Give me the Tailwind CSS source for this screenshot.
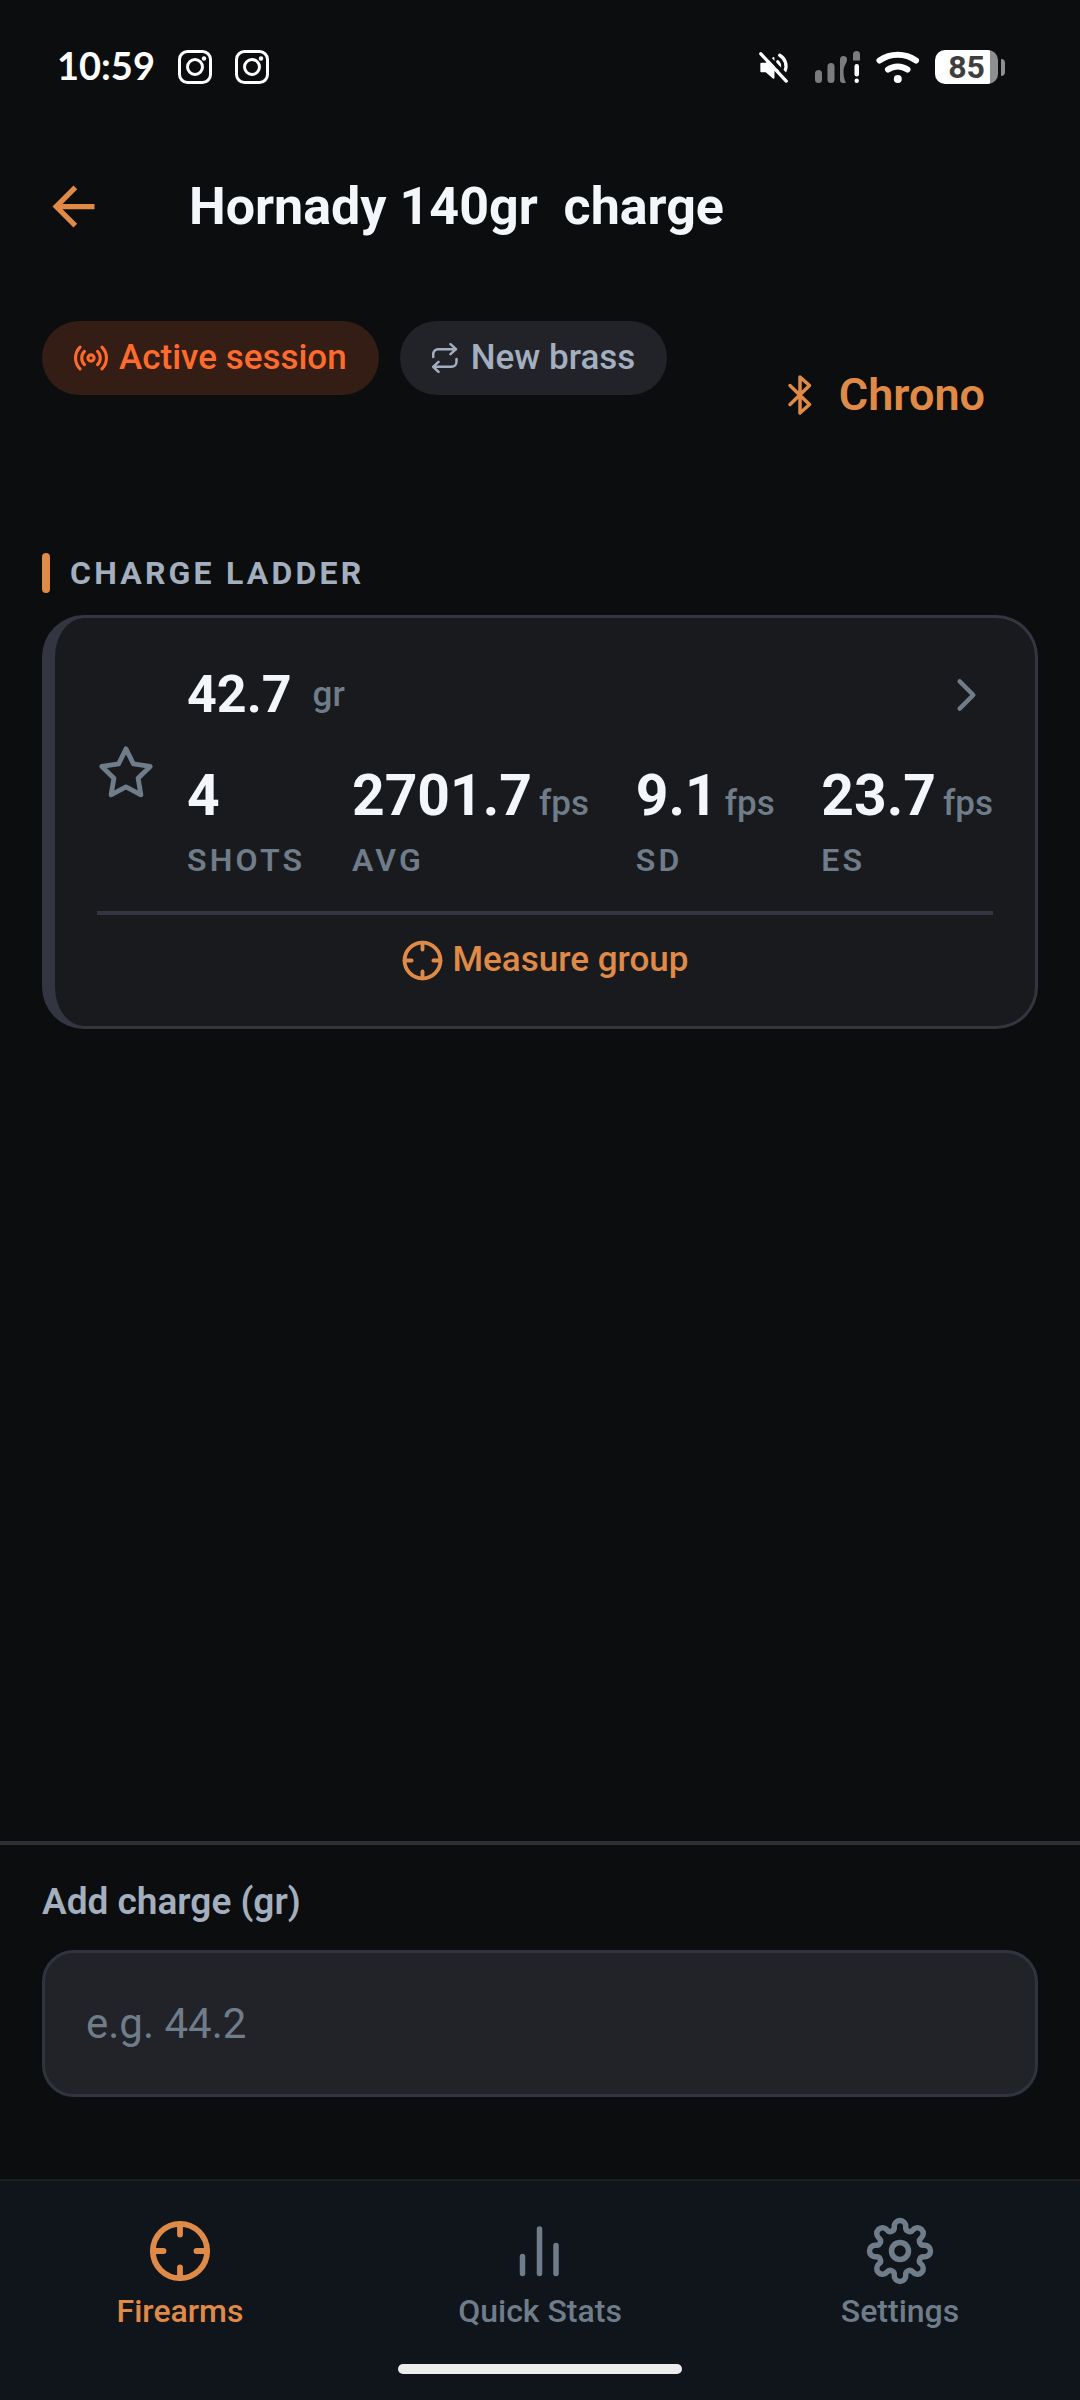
<!DOCTYPE html>
<html lang="en">
<head>
    <meta charset="UTF-8">
    <meta name="viewport" content="width=device-width, initial-scale=1.0">
    <title>Hornady 140gr charge</title>

    <script src="https://cdn.jsdelivr.net/npm/@tailwindcss/browser@4"></script>
</head>
<body class="min-h-screen flex flex-col bg-[#0b0d0e] font-['Roboto',sans-serif] text-[#f3f6fa]">

    <!-- Shared icons -->
    <svg class="hidden">
        <symbol id="crosshair" viewBox="0 0 64 64">
            <g fill="none" stroke="currentColor" stroke-width="6" stroke-linecap="round">
                <circle cx="32" cy="32" r="28"/>
                <path d="M32 4v11M32 49v11M4 32h11M49 32h11"/>
            </g>
        </symbol>
        <symbol id="instagram" viewBox="0 0 34 34">
            <rect x="1.5" y="1.5" width="31" height="31" rx="8" fill="none" stroke="currentColor" stroke-width="3"/>
            <circle cx="17" cy="17" r="7.5" fill="none" stroke="currentColor" stroke-width="3"/>
            <circle cx="26" cy="8.5" r="2.2" fill="currentColor"/>
        </symbol>
    </svg>

    <!-- Status bar -->
    <div class="flex items-center justify-between pt-[41px] pl-[57px] pr-[75px] text-white">
        <div class="flex items-center gap-[23px] h-[52px]">
            <span class="pb-1 font-['Lato',sans-serif] font-bold text-[38px] leading-[48px]">10:59</span>
            <svg class="w-[34px] h-[34px]"><use href="#instagram"/></svg>
            <svg class="w-[34px] h-[34px]"><use href="#instagram"/></svg>
        </div>
        <div class="flex items-center">
            <!-- muted -->
            <svg class="w-8 h-8 mr-[25px]" viewBox="0 1 32 34" fill="none" stroke="#fff" stroke-width="3.500" stroke-linecap="round">
                <path d="M2.5 14.5h5l8-6v21l-8-7h-5z" fill="#fff" stroke-width="2" stroke-linejoin="round"/>
                <path d="M20 12.500a7 7 0 0 1 1 8M22 5.500a13 13 0 0 1 5.500 17"/>
                <path d="M4 1.500L32 30" stroke="#0b0d0e" stroke-width="4"/>
                <path d="M2 4L29 33"/>
            </svg>
            <!-- signal -->
            <svg class="w-[45px] h-8 mr-4" viewBox="0 0 45 32" fill="#7c7c7c">
                <rect y="19" width="7" height="13" rx="3.500"/>
                <rect x="12.500" y="12" width="7" height="20" rx="3.500"/>
                <path d="M25 8.500a3.500 3.500 0 0 1 7 0c0 4-3.500 6-3.500 12 0 5 1 9 2.500 11-3 1.500-6 .5-6-2.500z"/>
                <path d="M38 9.500V3.500a3.500 3.500 0 0 1 7 0v6z"/>
                <rect x="39.500" y="13" width="4.500" height="12.500" rx="2.200" fill="#fff"/>
                <circle cx="41.700" cy="29.700" r="2.200" fill="#fff"/>
            </svg>
            <!-- wifi -->
            <svg class="w-11 h-8 mr-[15px]" viewBox="0 0 44 32" fill="none" stroke="#fff" stroke-width="6" stroke-linecap="round">
                <path d="M3.500 9.500a32 32 0 0 1 36.500 0M12 18.500a17 17 0 0 1 19.500 0"/>
                <circle cx="21.800" cy="28" r="4" fill="#fff" stroke="none"/>
            </svg>
            <!-- battery -->
            <span class="flex items-center justify-center w-[63px] h-[34px] rounded-[10px] bg-linear-to-r from-white from-[88%] to-[#8f8f91] to-[88%] font-bold text-[32px] leading-none text-[#3e3e3e]">85</span>
            <span class="w-1 h-[17px] ml-[3px] rounded-r-full bg-[#8f8f91]"></span>
        </div>
    </div>

    <header class="flex items-center gap-[84px] pt-[82px] pb-[83px] px-[42px]">
        <button aria-label="Back" class="text-[#e08a48]">
            <svg class="w-[63px] h-[63px]" viewBox="0 0 24 24" fill="currentColor"><path d="M20 11H7.830l5.590-5.590L12 4l-8 8 8 8 1.410-1.410L7.830 13H20v-2z"/></svg>
        </button>
        <h1 class="font-bold text-[52px] leading-[62px] whitespace-pre">Hornady 140gr  charge</h1>
    </header>

    <main class="flex-1 px-[42px]">
        <div class="flex items-start justify-between">
            <div class="flex gap-[21px] font-medium text-[35px] leading-[46px]">
                <span class="flex items-center gap-[11px] px-8 py-[14px] rounded-full bg-[#331d15] text-[#ff6b2c]">
                    <svg class="w-[34px] h-[34px]" viewBox="1 1 22 22" fill="none" stroke="currentColor" stroke-width="2" stroke-linecap="round">
                        <circle cx="12" cy="12" r="2"/>
                        <path d="M16.240 7.760a6 6 0 0 1 0 8.490M7.760 16.240a6 6 0 0 1 0-8.490M19.070 4.930a10 10 0 0 1 0 14.140M4.930 19.070a10 10 0 0 1 0-14.140"/>
                    </svg>
                    Active session
                </span>
                <span class="flex items-center gap-[11px] px-8 py-[14px] rounded-full bg-[#222328] text-[#a3afbf]">
                    <svg class="w-7 h-[30px]" viewBox="0 0 28 30" fill="none" stroke="currentColor" stroke-width="2.500" stroke-linecap="round" stroke-linejoin="round">
                        <path d="M18.500 1.200l5.500 5-5.500 5M1.200 14v-2.800a5 5 0 0 1 5-5H24M6.500 18.800l-5.300 5 5.300 5M24.500 16v2.800a5 5 0 0 1-5 5H1.200"/>
                    </svg>
                    New brass
                </span>
            </div>
            <button class="flex items-center gap-[18px] py-[50px] pr-[53px] font-semibold text-[45px] leading-[48px] text-[#e08a48]">
                <svg class="w-[42px] h-[42px]" viewBox="0 0 42 42" fill="none" stroke="currentColor" stroke-width="3.500" stroke-linecap="round" stroke-linejoin="round">
                    <path d="M11 11.500L30.500 30.500 21 39V3l9.500 8.500L11 30.500"/>
                </svg>
                Chrono
            </button>
        </div>

        <div class="flex items-center gap-5 mt-[84px]">
            <span class="w-2 h-10 rounded-full bg-[#e08a48]"></span>
            <h2 class="font-bold text-[32px] leading-[40px] tracking-widest text-[#a3afbf]">CHARGE LADDER</h2>
        </div>

        <!-- Charge card -->
        <section class="mt-[22px] pt-[47px] pb-[43px] px-[42px] rounded-[42px] border-[3px] border-l-[13px] border-[#333640] bg-[#191a1e]">
            <div class="flex items-center gap-8">
                <button aria-label="Favourite" class="text-[#6f7c8a]">
                    <svg class="w-[58px] h-[58px]" viewBox="0 0 24 24" fill="none" stroke="currentColor" stroke-width="2" stroke-linejoin="round"><path d="M12 2l3.090 6.260L22 9.270l-5 4.870 1.180 6.880L12 17.770l-6.180 3.250L7 14.140 2 9.270l6.910-1.010z"/></svg>
                </button>
                <div class="flex-1">
                    <div class="flex items-center justify-between">
                        <div class="flex items-center gap-[21px]">
                            <span class="font-bold text-[52px] leading-[60px]">42.7</span>
                            <span class="font-medium text-[35px] leading-[46px] text-[#6f7c8a]">gr</span>
                        </div>
                        <svg class="w-[52px] h-[52px] text-[#6f7c8a]" viewBox="0 0 512 512" fill="none" stroke="currentColor" stroke-width="44" stroke-linecap="round" stroke-linejoin="round"><path d="M184 122l134 134-134 134"/></svg>
                    </div>
                    <dl class="flex justify-between mt-[37px] text-[#6f7c8a]">
                        <div class="flex flex-col-reverse gap-[10px]">
                            <dt class="font-semibold text-[32px] leading-[40px] tracking-widest">SHOTS</dt>
                            <dd class="font-bold text-[57px] leading-[68px] text-[#f3f6fa]">4</dd>
                        </div>
                        <div class="flex flex-col-reverse gap-[10px]">
                            <dt class="font-semibold text-[32px] leading-[40px] tracking-widest">AVG</dt>
                            <dd class="flex items-baseline gap-[7px] font-medium text-[35px] leading-none"><b class="font-bold text-[57px] leading-[68px] text-[#f3f6fa]">2701.7</b>fps</dd>
                        </div>
                        <div class="flex flex-col-reverse gap-[10px]">
                            <dt class="font-semibold text-[32px] leading-[40px] tracking-widest">SD</dt>
                            <dd class="flex items-baseline gap-[7px] font-medium text-[35px] leading-none"><b class="font-bold text-[57px] leading-[68px] text-[#f3f6fa]">9.1</b>fps</dd>
                        </div>
                        <div class="flex flex-col-reverse gap-[10px]">
                            <dt class="font-semibold text-[32px] leading-[40px] tracking-widest">ES</dt>
                            <dd class="flex items-baseline gap-[7px] font-medium text-[35px] leading-none"><b class="font-bold text-[57px] leading-[68px] text-[#f3f6fa]">23.7</b>fps</dd>
                        </div>
                    </dl>
                </div>
            </div>
            <button class="flex items-center justify-center gap-[10px] w-full mt-[31px] pt-[22px] border-t-4 border-[#333640] font-medium text-[35px] leading-[46px] text-[#e08a48]">
                <svg class="w-[41px] h-[41px]"><use href="#crosshair"/></svg>
                Measure group
            </button>
        </section>
    </main>

    <!-- Add charge -->
    <form class="pt-[33px] pb-[82px] px-[42px] border-t-4 border-[#2c2f38]">
        <label for="charge" class="block font-semibold text-[37px] leading-[48px] text-[#a3afbf]">Add charge (gr)</label>
        <input id="charge" type="text" inputmode="decimal" placeholder="e.g. 44.2" class="block w-full mt-6 px-[41px] py-[43px] rounded-[32px] border-[3px] border-[#30343e] bg-[#222328] text-[42px] leading-[55px] placeholder:text-[#6f7c8a]">
    </form>

    <!-- Bottom tabs -->
    <nav class="pt-9 pb-[26px] border-t-2 border-[#191f26] bg-[#10141b]">
        <div class="grid grid-cols-3 font-medium text-[32px] leading-[40px] text-[#6f7c8a]">
            <a href="#" class="flex flex-col items-center gap-[6px] text-[#e08a48]">
                <svg class="w-[68px] h-[68px] p-[3px]"><use href="#crosshair"/></svg>
                Firearms
            </a>
            <a href="#" class="flex flex-col items-center gap-[6px]">
                <svg class="w-[68px] h-[68px]" viewBox="0 0 68 68" fill="none" stroke="currentColor" stroke-width="5.500" stroke-linecap="round"><path d="M16.500 39.500V56.500M33.500 12V56.500M50 28.500V56.500"/></svg>
                Quick Stats
            </a>
            <a href="#" class="flex flex-col items-center gap-[6px]">
                <svg class="w-[68px] h-[68px]" viewBox="-34 -34 68 68" fill="none" stroke="currentColor" stroke-width="5.500">
                    <circle r="8.500"/>
                    <path d="M-5.750-23.970A5.800 5.800 0 1 1 5.750-23.970A4 4 0 0 0 12.880-21.020A5.800 5.800 0 1 1 21.020-12.880A4 4 0 0 0 23.970-5.750A5.800 5.800 0 1 1 23.970 5.750A4 4 0 0 0 21.020 12.880A5.800 5.800 0 1 1 12.880 21.020A4 4 0 0 0 5.750 23.970A5.800 5.800 0 1 1-5.750 23.970A4 4 0 0 0-12.880 21.020A5.800 5.800 0 1 1-21.020 12.880A4 4 0 0 0-23.970 5.750A5.800 5.800 0 1 1-23.970-5.750A4 4 0 0 0-21.020-12.880A5.800 5.800 0 1 1-12.880-21.020A4 4 0 0 0-5.750-23.970z"/>
                </svg>
                Settings
            </a>
        </div>
        <div class="w-[284px] h-[10px] mx-auto mt-[33px] rounded-full bg-[#ececec]"></div>
    </nav>
</body>
</html>
